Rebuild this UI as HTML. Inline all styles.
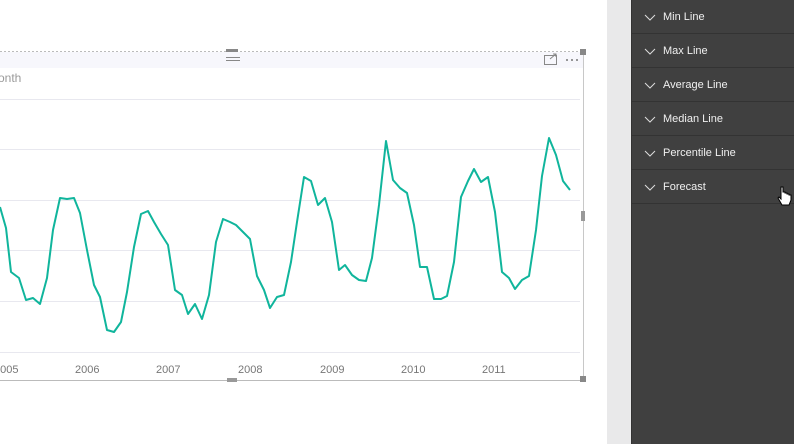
<!DOCTYPE html>
<html><head><style>
body{margin:0;width:794px;height:444px;overflow:hidden;background:#fff;font-family:"Liberation Sans",sans-serif;position:relative}
.strip{position:absolute;left:607px;top:0;width:24px;height:444px;background:#e9e9ea}
.panel{position:absolute;left:631px;top:0;width:163px;height:444px;background:#404040;border-left:1px solid #333}
.row{position:absolute;left:0;width:163px;height:33px;border-bottom:1px solid #333;color:#f0f0f0;font-size:11px}
.row span{position:absolute;left:31px;top:11px}
.row svg{position:absolute;left:12px;top:14px}
</style></head><body>
<div class="strip"></div>
<svg style="position:absolute;left:0;top:0" width="607" height="444">
<rect x="0" y="52" width="583" height="16" fill="#f7f7fc"/>
<line x1="0" y1="51.5" x2="583" y2="51.5" stroke="#bbb" stroke-dasharray="2,2"/>
<line x1="583.5" y1="52" x2="583.5" y2="381" stroke="#c8c8c8"/>
<line x1="0" y1="380.5" x2="583" y2="380.5" stroke="#bbb"/>
<rect x="580" y="49" width="6" height="6" fill="#888"/>
<rect x="580" y="376" width="6" height="6" fill="#888"/>
<rect x="581" y="211" width="4" height="10" fill="#999"/>
<rect x="226" y="49" width="12" height="3" fill="#888"/>
<rect x="227" y="378" width="10" height="4" fill="#999"/>
<line x1="226" y1="57.5" x2="240" y2="57.5" stroke="#888"/><line x1="226" y1="60.5" x2="240" y2="60.5" stroke="#888"/>
<rect x="544.5" y="55.5" width="12" height="9" fill="none" stroke="#888"/>
<path d="M550 59 L556 54 M553 54 H556 V57" fill="none" stroke="#888"/>
<circle cx="567" cy="60" r="1" fill="#777"/><circle cx="572" cy="60" r="1" fill="#777"/><circle cx="577" cy="60" r="1" fill="#777"/>
<text x="-2" y="82" font-size="12" fill="#9a9a9a" font-family="Liberation Sans">onth</text>
<g stroke="#e8e8ef" stroke-width="1">
<line x1="0" y1="99.5" x2="580" y2="99.5"/><line x1="0" y1="149.5" x2="580" y2="149.5"/>
<line x1="0" y1="200.5" x2="580" y2="200.5"/><line x1="0" y1="250.5" x2="580" y2="250.5"/>
<line x1="0" y1="301.5" x2="580" y2="301.5"/><line x1="0" y1="352.5" x2="580" y2="352.5"/>
</g>
<g font-size="11" fill="#777" font-family="Liberation Sans">
<text x="-6" y="373">2005</text><text x="75" y="373">2006</text><text x="156" y="373">2007</text>
<text x="238" y="373">2008</text><text x="320" y="373">2009</text><text x="401" y="373">2010</text><text x="482" y="373">2011</text>
</g>
<polyline fill="none" stroke="#10b59c" stroke-width="2" stroke-linejoin="round" points="0,207 6,228 11,272 19,278 26,300 33,298 40,304 47,278 53,230 60,198 67,199 74,198 80,213 87,250 94,285 100,297 107,330 114,332 121,322 127,292 134,247 141,214 148,211 154,222 161,234 168,245 175,290 182,295 188,314 195,304 202,319 209,295 216,242 223,219 230,222 236,225 243,232 250,239 257,276 264,290 270,308 277,297 284,295 291,262 297,222 304,177 311,181 318,205 325,198 332,222 339,270 345,265 352,275 359,280 366,281 372,258 379,205 386,141 393,180 400,188 407,193 414,225 420,267 427,267 434,299 441,299 447,296 454,262 461,197 468,181 474,169 481,182 488,177 495,212 502,272 509,278 515,289 522,280 529,276 536,230 542,176 549,138 556,155 563,181 570,190"/>
</svg>
<div class="panel">
<div class="row" style="top:0"><svg width="12" height="7"><polyline points="1,1 6,6 11,1" fill="none" stroke="#ddd"/></svg><span>Min Line</span></div>
<div class="row" style="top:34px"><svg width="12" height="7"><polyline points="1,1 6,6 11,1" fill="none" stroke="#ddd"/></svg><span>Max Line</span></div>
<div class="row" style="top:68px"><svg width="12" height="7"><polyline points="1,1 6,6 11,1" fill="none" stroke="#ddd"/></svg><span>Average Line</span></div>
<div class="row" style="top:102px"><svg width="12" height="7"><polyline points="1,1 6,6 11,1" fill="none" stroke="#ddd"/></svg><span>Median Line</span></div>
<div class="row" style="top:136px"><svg width="12" height="7"><polyline points="1,1 6,6 11,1" fill="none" stroke="#ddd"/></svg><span>Percentile Line</span></div>
<div class="row" style="top:170px"><svg width="12" height="7"><polyline points="1,1 6,6 11,1" fill="none" stroke="#ddd"/></svg><span>Forecast</span></div>
<svg style="position:absolute;left:145px;top:186px" width="16" height="22"><path d="M4,1 v12 l-2,-2 l-1,1 l4,7 h7 l2,-5 v-5 h-2 v-1 h-2 v-1 h-2 v-1 h-2 v-5 z" fill="#fff" stroke="#000" stroke-width="1"/></svg>
</div>
</body></html>
